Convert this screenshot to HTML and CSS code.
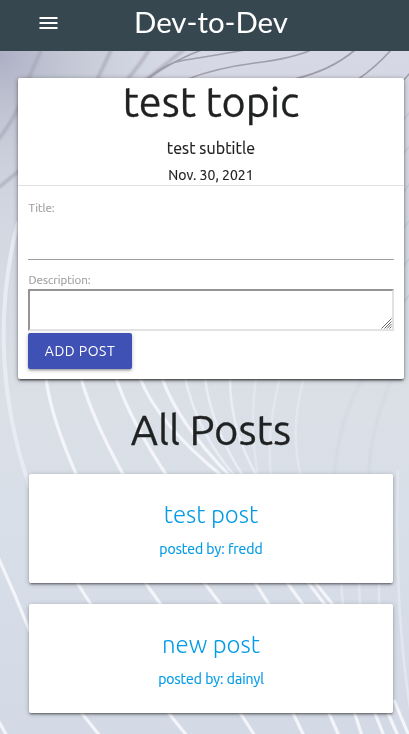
FILE: index.html
```html
<!DOCTYPE html>
<html lang="en">
<head>
<meta charset="utf-8">
<meta name="viewport" content="width=device-width, initial-scale=1">
<title>Dev-to-Dev</title>
<link rel="stylesheet" href="styles.css">
</head>
<body>
<svg class="backdrop" viewBox="0 0 409 734" preserveAspectRatio="none" aria-hidden="true">
  <defs>
    <linearGradient id="base" x1="0" y1="0" x2="0" y2="1">
      <stop offset="0.07" stop-color="#d6d8e5"/>
      <stop offset="0.3" stop-color="#d3d7e1"/>
      <stop offset="0.55" stop-color="#dbe0e7"/>
      <stop offset="0.75" stop-color="#d7dee8"/>
      <stop offset="1" stop-color="#d3dae6"/>
    </linearGradient>
    <radialGradient id="corner" gradientUnits="userSpaceOnUse" cx="0" cy="55" r="170">
      <stop offset="0" stop-color="#aeafc5"/>
      <stop offset="0.3" stop-color="#bfc3d1"/>
      <stop offset="1" stop-color="#c9cfdb" stop-opacity="0"/>
    </radialGradient>
    <filter id="soft"><feGaussianBlur stdDeviation="1.3"/></filter>
    <filter id="fine"><feGaussianBlur stdDeviation="0.6"/></filter>
  </defs>
  <rect width="409" height="734" fill="url(#base)"/>
  <rect width="409" height="230" fill="url(#corner)"/>
  <g class="wide-lines" filter="url(#soft)">
    <path d="M42 48L27 82M112 48L96 82M20 104Q12 122-2 140M20 170L-2 188"/>
    <path d="M150 48Q141 64 125 82M186 48Q166 64 143 82"/>
  </g>
  <g class="dark-lines" filter="url(#fine)">
    <path d="M204 49Q176 59 147 79M245 50Q205 57 185 60T147 79M311 50Q294 58 255 63T188 79M355 50Q330 71 294 79M391 50Q376 67 357 80M410 73L402 82"/>
  </g>
  <g class="faint-lines" filter="url(#fine)">
    <path d="M410 112L402 121M410 146L402 155M410 183L402 194M410 220L402 230M410 258L402 268M410 294L402 304"/>
  </g>
  <g class="shade-lines" filter="url(#soft)">
    <path d="M363 378Q340 416 334 476M392 378Q370 430 369 476"/>
  </g>
  <g class="white-lines" filter="url(#fine)">
    <path class="edge-line" d="M18 222C-1 295-5 387 30 488"/>
    <path d="M46 378Q51 418 77 476M81 378Q92 418 124 476M116 378Q130 420 167 476M140 378Q158 424 222 476M162 378Q178 423 230 476"/>
    <path d="M-2 557Q15 594 30 632M76 581L92 606M144 581L162 606M203 581L222 606M254 581L270 606M286 581L304 606M307 581L326 606M314 581L334 606"/>
    <path d="M-2 720L7 736M80 711L100 736M167 711L187 736M239 711L255 736M292 711L304 736M328 711L339 736M354 711L362 736M374 711L384 736M387 711L398 736M394 700L409 736"/>
  </g>
  <g class="pale-lines" filter="url(#fine)">
    <path d="M185 378Q198 434 235 476M205 378Q211 426 243 476M230 378Q230 430 257 476"/>
    <path class="ghost-line" d="M256 378Q249 425 258 476M280 378Q266 430 271 476M304 378Q289 430 301 476M341 581L343 606M359 581L360 606M379 581V606M398 470Q394 610 411 714"/>
  </g>
</svg>

<header class="navbar">
  <svg class="menu-icon" viewBox="0 0 24 24" aria-label="Menu"><path d="M3 18h18v-2H3v2zm0-5h18v-2H3v2zm0-7v2h18V6H3z"/></svg>
  <div class="brand">Dev-to-Dev</div>
</header>

<main class="content">
  <section class="topic-card">
    <div class="topic-head">
      <h1 class="topic-title">test topic</h1>
      <p class="topic-subtitle">test subtitle</p>
      <p class="topic-date">Nov. 30, 2021</p>
    </div>
    <form class="post-form">
      <label class="label" for="title">Title:</label>
      <input class="title-input" id="title" type="text">
      <label class="label" for="description">Description:</label>
      <div class="description-wrap">
        <textarea class="description" id="description"></textarea>
        <svg class="grip" viewBox="0 0 11 11" aria-hidden="true"><path d="M.5 10.5l10-10M3.5 10.5l7-7M6 10.5L10.500 6M8.500 10.500l2-2"/></svg>
      </div>
      <button class="submit" type="button">ADD POST</button>
    </form>
  </section>

  <h2 class="posts-heading">All Posts</h2>
  <section class="posts">
    <a class="post">
      <span class="post-title">test post</span>
      <span class="post-author">posted by: fredd</span>
    </a>
    <a class="post">
      <span class="post-title">new post</span>
      <span class="post-author">posted by: dainyl</span>
    </a>
  </section>
</main>
</body>
</html>
```
FILE: styles.css
```css
* { box-sizing: border-box; }

body {
  margin: 0;
  height: 734px;
  overflow: hidden;
  font-family: Ubuntu, "Noto Sans", sans-serif;
  color: #202122;
}

.backdrop {
  position: fixed;
  inset: 0;
  z-index: -1;
  width: 100%;
  height: 100%;
}
.backdrop g { fill: none; }
.wide-lines { stroke: #a5a3b5; stroke-width: 3.5; opacity: .65; }
.dark-lines { stroke: #a19eac; stroke-width: 1.7; }
.faint-lines { stroke: #c3c9d6; stroke-width: 2; opacity: .7; }
.shade-lines { stroke: #cdd4df; stroke-width: 3; opacity: .5; }
.white-lines { stroke: #f3f5fa; stroke-width: 3.2; }
.edge-line { stroke: #e8ebf3; stroke-width: 4; }
.pale-lines { stroke: #e9edf5; stroke-width: 2.5; }
.ghost-line { stroke: #e2e6ef; }

.navbar {
  display: grid;
  grid-template-columns: 36px 1fr 36px;
  height: 51px;
  padding: 0 23px 0 36px;
  background: #37474f;
  color: #fff;
}
.menu-icon {
  width: 25px;
  height: 24px;
  margin-top: 11px;
  fill: #fff;
}
.brand {
  font: 400 29.4px/43px Lato, sans-serif;
  text-align: center;
  white-space: nowrap;
}

.content { padding: 27px 5px 0 18px; }

.topic-card {
  height: 301px;
  background: #fff;
  border-radius: 2px;
  box-shadow: 0 2px 2px rgba(0, 0, 0, .28), 0 3px 1px -2px rgba(0, 0, 0, .3), 0 1px 5px rgba(0, 0, 0, .4);
}
.topic-head {
  height: 108px;
  padding-top: 1px;
  border-bottom: 1px solid #e0e0e0;
  text-align: center;
}
.topic-title {
  margin: 0;
  font-size: 41.4px;
  font-weight: 400;
  line-height: 46px;
  -webkit-text-stroke: .3px;
}
.topic-subtitle {
  margin: 11px 0 0;
  font-size: 16px;
  line-height: 24px;
  letter-spacing: .12px;
  -webkit-text-stroke: .2px;
}
.topic-date {
  margin: 5px 0 0;
  font-size: 14px;
  line-height: 21px;
  -webkit-text-stroke: .2px;
}

.post-form {
  display: flex;
  flex-direction: column;
  align-items: stretch;
  padding: 14px 10px 0;
}
.label {
  height: 16px;
  padding-left: .5px;
  font-size: 11.5px;
  line-height: 16px;
  color: #9e9e9e;
  -webkit-text-stroke: .15px;
}
.title-input {
  height: 44px;
  margin: 0 0 12px;
  padding: 0;
  border: 0;
  border-bottom: 1px solid #9e9e9e;
  background: transparent;
}
.description-wrap {
  position: relative;
  display: grid;
  margin: 1px 0 2px;
}
.description {
  height: 42px;
  border: 2px solid;
  border-color: #949494 #e2e2e2 #e2e2e2 #949494;
  background: #fff;
  resize: none;
  overflow: hidden;
}
.grip {
  position: absolute;
  right: 2px;
  bottom: 2px;
  width: 11px;
  height: 11px;
  fill: none;
  stroke: #555;
  stroke-width: .9;
}
.submit {
  align-self: flex-start;
  width: 104px;
  height: 36px;
  padding: 0;
  border: 0;
  border-radius: 2px;
  background: #3f51b5;
  box-shadow: 0 2px 2px rgba(0, 0, 0, .14), 0 3px 1px -2px rgba(0, 0, 0, .12), 0 1px 5px rgba(0, 0, 0, .2);
  color: #fff;
  font: 400 14px/36px Ubuntu, "Noto Sans", sans-serif;
  letter-spacing: .5px;
}

.posts-heading {
  margin: 27px 0 21px;
  font-size: 41.8px;
  font-weight: 400;
  line-height: 47px;
  text-align: center;
  -webkit-text-stroke: .3px;
}
.posts {
  display: flex;
  flex-direction: column;
  gap: 21px;
  padding: 0 11px;
}
.post {
  display: flex;
  flex-direction: column;
  height: 109px;
  padding-top: 25px;
  border-radius: 2px;
  background: #fff;
  box-shadow: 0 2px 2px rgba(0, 0, 0, .2), 0 3px 1px -2px rgba(0, 0, 0, .2), 0 1px 5px rgba(0, 0, 0, .25);
  color: #039be5;
  text-align: center;
}
.post-title {
  font-size: 24px;
  font-weight: 300;
  line-height: 32px;
}
.post-author {
  margin-top: 8px;
  font-size: 14px;
  line-height: 21px;
  -webkit-text-stroke: .2px;
}
```
